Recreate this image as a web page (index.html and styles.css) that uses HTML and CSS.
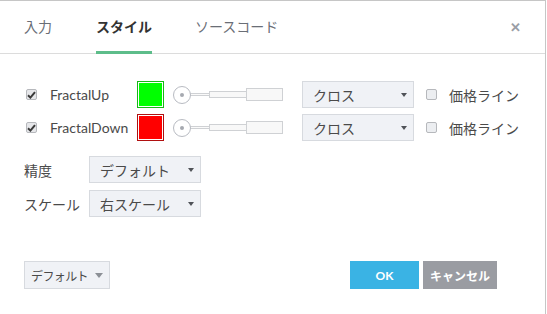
FILE: index.html
```html
<!DOCTYPE html>
<html lang="ja">
<head>
<meta charset="utf-8">
<link rel="stylesheet" href="styles.css">
</head>
<body>
<div class="dialog">
  <div class="tabs">
    <div class="tab">入力</div>
    <div class="tab active">スタイル</div>
    <div class="tab">ソースコード</div>
    <div class="close">&#x2715;</div>
  </div>
  <div class="content">
    <div class="plot-row">
      <span class="check checked"><svg width="9" height="8" viewBox="0 0 9 8"><path d="M1 4.2 L3.4 6.6 L8 1.2" fill="none" stroke="#3a3a3a" stroke-width="2"/></svg></span>
      <span class="plot-name">FractalUp</span>
      <span class="swatch green"><span></span></span>
      <span class="slider"><span class="knob"></span><span class="line"></span><span class="thin"></span><span class="thick"></span></span>
      <span class="select wide"><span>クロス</span><span class="caret"></span></span>
      <span class="check"></span>
      <span class="label-price">価格ライン</span>
    </div>
    <div class="plot-row">
      <span class="check checked"><svg width="9" height="8" viewBox="0 0 9 8"><path d="M1 4.2 L3.4 6.6 L8 1.2" fill="none" stroke="#3a3a3a" stroke-width="2"/></svg></span>
      <span class="plot-name">FractalDown</span>
      <span class="swatch red"><span></span></span>
      <span class="slider"><span class="knob"></span><span class="line"></span><span class="thin"></span><span class="thick"></span></span>
      <span class="select wide"><span>クロス</span><span class="caret"></span></span>
      <span class="check"></span>
      <span class="label-price">価格ライン</span>
    </div>
    <div class="opt-row first">
      <span class="opt-label">精度</span>
      <span class="select"><span>デフォルト</span><span class="caret"></span></span>
    </div>
    <div class="opt-row">
      <span class="opt-label">スケール</span>
      <span class="select"><span>右スケール</span><span class="caret"></span></span>
    </div>
  </div>
  <div class="footer">
    <span class="defaults">デフォルト<span class="caret big"></span></span>
    <span class="spacer"></span>
    <span class="btn ok">OK</span>
    <span class="btn cancel">キャンセル</span>
  </div>
</div>
</body>
</html>
```
FILE: styles.css
```css
* { box-sizing: border-box; }
html, body { margin: 0; padding: 0; background: #fff; }
body {
  font-family: "Lato", "Noto Sans CJK JP", sans-serif;
  font-size: 13px;
  color: #4a4a4a;
}
.dialog {
  width: 546px;
  height: 314px;
  border-top: 1px solid #c6c6c6;
  border-right: 1px solid #c6c6c6;
  display: flex;
  flex-direction: column;
}
.tabs {
  height: 53px;
  border-bottom: 1px solid #dcdcdc;
  display: flex;
  align-items: stretch;
  padding-left: 24px;
  padding-right: 24px;
}
.tab {
  display: flex;
  align-items: center;
  font-size: 14px;
  color: #6a6e76;
  margin-right: 44px;
  border-bottom: 3px solid transparent;
  margin-bottom: -1px;
  padding-bottom: 1px;
}
.tab.active {
  color: #333;
  font-weight: bold;
  border-bottom-color: #5dbd8a;
  margin-right: 43px;
}
.close {
  margin-left: auto;
  display: flex;
  align-items: center;
  font-size: 13px;
  color: #9a9ea6;
  font-weight: bold;
}
.content {
  padding: 27px 0 0 26px;
}
.plot-row {
  display: flex;
  align-items: center;
  height: 27px;
  margin-bottom: 6px;
}
.check {
  width: 11px;
  height: 11px;
  border: 1px solid #b6b8bc;
  border-radius: 2px;
  background: #eceef1;
  display: inline-flex;
  align-items: center;
  justify-content: center;
}
.check.checked { background: #e6e7ea; }
.plot-name {
  width: 87px;
  margin-left: 13px;
  font-size: 14px;
  color: #4a4a4a;
}
.swatch {
  width: 27px;
  height: 27px;
  padding: 1px;
  border: 1px solid;
  background: #fff;
  display: inline-block;
}
.swatch span { display: block; width: 100%; height: 100%; }
.swatch.green { border-color: #17b817; }
.swatch.green span { background: #00ff00; }
.swatch.red { border-color: #b01010; }
.swatch.red span { background: #ff0000; }
.slider {
  display: flex;
  align-items: center;
  margin-left: 9px;
  width: 111px;
  position: relative;
}
.knob {
  width: 18px;
  height: 18px;
  border-radius: 50%;
  border: 1px solid #b8bbc2;
  background: #fff;
  position: relative;
  flex: none;
}
.knob::after {
  content: "";
  position: absolute;
  left: 6px; top: 6px;
  width: 4px; height: 4px;
  border-radius: 50%;
  background: #a6a9b0;
}
.line {
  width: 19px;
  height: 3px;
  border-top: 1px solid #cfd1d4;
  border-bottom: 1px solid #cfd1d4;
  background: #fafafa;
  margin-left: -1px;
}
.thin {
  width: 37px;
  height: 7px;
  border: 1px solid #cfd1d4;
  border-right: none;
  background: #f8f8f8;
}
.thick {
  width: 37px;
  height: 13px;
  border: 1px solid #cfd1d4;
  background: #f8f8f8;
}
.select {
  height: 27px;
  width: 112px;
  background: #f0f2f6;
  border: 1px solid #d7dadf;
  display: inline-flex;
  align-items: center;
  justify-content: space-between;
  padding: 0 6px 0 10px;
  font-size: 14px;
  color: #4a4a4a;
}
.select.wide { margin-left: 18px; margin-right: 12px; }
.caret {
  width: 0; height: 0;
  border-left: 3.5px solid transparent;
  border-right: 3.5px solid transparent;
  border-top: 4px solid #505358;
}
.caret.big {
  border-left-width: 4.5px;
  border-right-width: 4.5px;
  border-top-width: 5px;
  border-top-color: #8c9096;
  margin-left: 7px;
  flex: none;
}
.label-price {
  margin-left: 12px;
  font-size: 14px;
  color: #4a4a4a;
}
.opt-row {
  display: flex;
  align-items: center;
  margin-left: -2px;
  margin-bottom: 7px;
}
.opt-row.first { margin-top: 15px; }
.opt-label {
  width: 65px;
  font-size: 14px;
}
.footer {
  display: flex;
  align-items: center;
  padding: 0 48px 0 24px;
  margin-top: auto;
  margin-bottom: 25px;
  height: 28px;
}
.defaults {
  height: 28px;
  width: 86px;
  background: #f0f2f6;
  border: 1px solid #d7dadf;
  display: inline-flex;
  align-items: center;
  justify-content: center;
  white-space: nowrap;
  font-size: 12px;
  letter-spacing: -0.6px;
  color: #4a4a4a;
}
.spacer { flex: 1; }
.btn {
  height: 28px;
  display: inline-flex;
  align-items: center;
  justify-content: center;
  color: #fff;
  font-weight: bold;
  font-size: 12px;
}
.btn.ok { width: 69px; background: #3ab3e4; }
.btn.cancel { width: 74px; background: #9a9ca2; margin-left: 4px; }
```
